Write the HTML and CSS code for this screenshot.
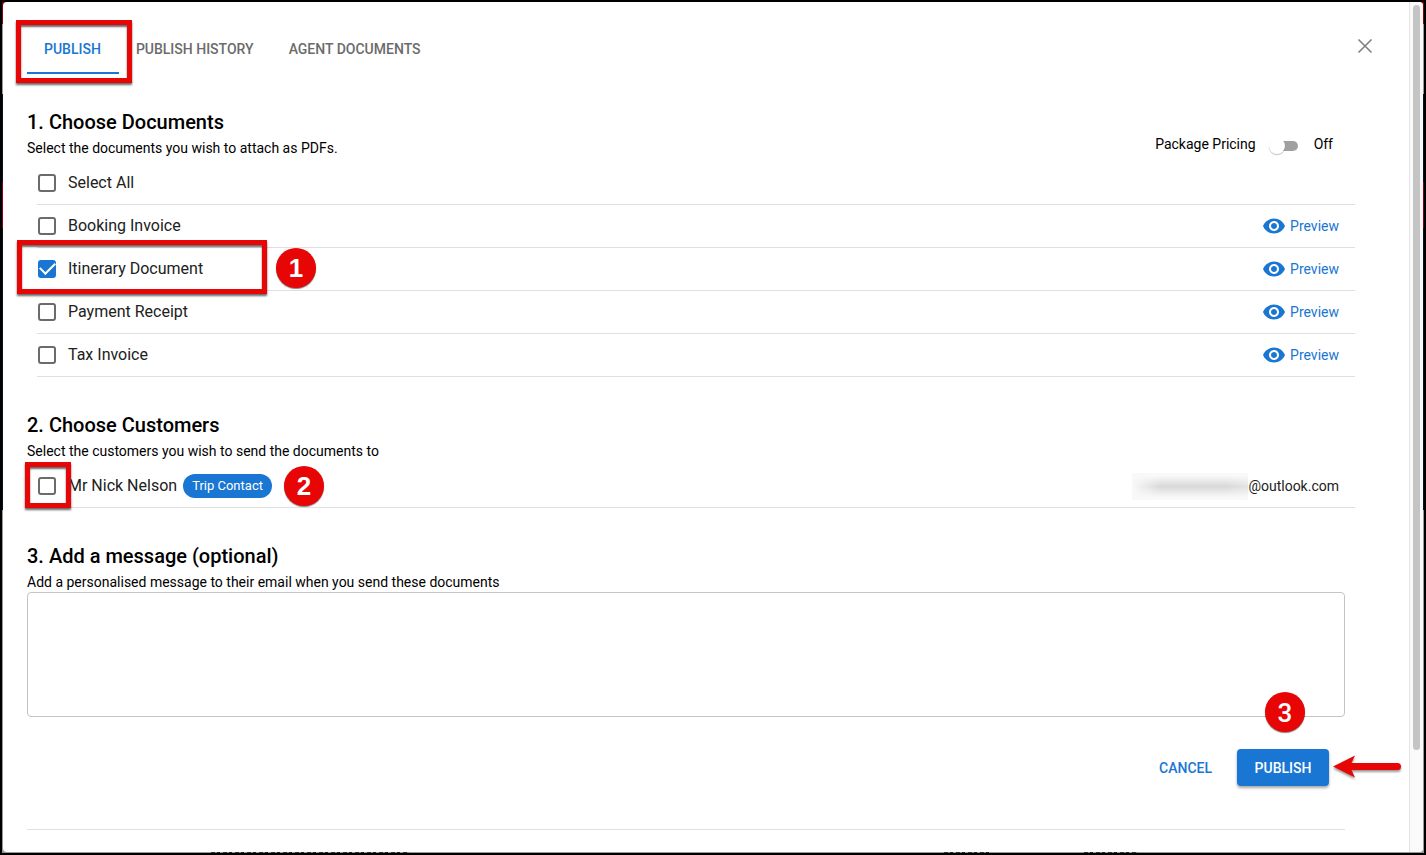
FILE: index.html
```html
<!DOCTYPE html>
<html lang="en">
<head>
<meta charset="utf-8">
<title>Publish documents</title>
<link rel="stylesheet" href="styles.css">
</head>
<body>
<svg class="sprite" aria-hidden="true">
  <symbol id="eye" viewBox="0 0 24 24"><path d="M12 4.500C7 4.500 2.730 7.610 1 12c1.730 4.390 6 7.500 11 7.500s9.270-3.110 11-7.500c-1.730-4.390-6-7.500-11-7.500zM12 17c-2.760 0-5-2.240-5-5s2.240-5 5-5 5 2.240 5 5-2.240 5-5 5zm0-8c-1.660 0-3 1.340-3 3s1.340 3 3 3 3-1.340 3-3-1.340-3-3-3z"/></symbol>
</svg>
<div class="backdrop">
  <div class="dialog" role="dialog" aria-label="Publish">
    <main class="dialog-body">
      <header class="top">
        <nav class="tabs" role="tablist">
          <div class="tab-holder">
            <button class="tab tab-active" role="tab" aria-selected="true">PUBLISH</button>
            <span class="mark mark-tab"></span>
          </div>
          <button class="tab" role="tab">PUBLISH HISTORY</button>
          <button class="tab" role="tab">AGENT DOCUMENTS</button>
        </nav>
        <button class="close" aria-label="Close">
          <svg viewBox="0 0 16 16" width="16" height="16"><path d="M1.500 1.500l13 13M14.500 1.500l-13 13" stroke="currentColor" stroke-width="1.600" fill="none"/></svg>
        </button>
      </header>

      <div class="content">
        <section class="section">
          <div class="section-head">
            <div>
              <h2>1. Choose Documents</h2>
              <p class="hint">Select the documents you wish to attach as PDFs.</p>
            </div>
            <div class="pricing">
              <label for="pricing">Package Pricing</label>
              <input class="switch" type="checkbox" role="switch" id="pricing">
              <span>Off</span>
            </div>
          </div>
          <ul class="list">
            <li class="row"><label class="choice"><input class="check" type="checkbox"><span>Select All</span></label></li>
            <li class="row"><label class="choice"><input class="check" type="checkbox"><span>Booking Invoice</span></label>
              <a class="preview" href="#"><svg width="24" height="24"><use href="#eye"/></svg>Preview</a></li>
            <li class="row"><label class="choice"><input class="check" type="checkbox" checked><span>Itinerary Document</span></label>
              <a class="preview" href="#"><svg width="24" height="24"><use href="#eye"/></svg>Preview</a>
              <span class="mark mark-document"></span><span class="step step-one">1</span></li>
            <li class="row"><label class="choice"><input class="check" type="checkbox"><span>Payment Receipt</span></label>
              <a class="preview" href="#"><svg width="24" height="24"><use href="#eye"/></svg>Preview</a></li>
            <li class="row"><label class="choice"><input class="check" type="checkbox"><span>Tax Invoice</span></label>
              <a class="preview" href="#"><svg width="24" height="24"><use href="#eye"/></svg>Preview</a></li>
          </ul>
        </section>

        <section class="section">
          <h2>2. Choose Customers</h2>
          <p class="hint">Select the customers you wish to send the documents to</p>
          <ul class="list">
            <li class="row">
              <label class="choice"><input class="check" type="checkbox"><span>Mr Nick Nelson</span><span class="chip">Trip Contact</span></label>
              <span class="email"><span class="redacted"></span>@outlook.com</span>
              <span class="mark mark-customer"></span><span class="step step-two">2</span>
            </li>
          </ul>
        </section>

        <section class="section">
          <h2>3. Add a message (optional)</h2>
          <label class="hint" for="message">Add a personalised message to their email when you send these documents</label>
          <textarea class="message" id="message"></textarea>
        </section>

        <footer class="actions">
          <button class="button button-text">CANCEL</button>
          <div class="publish">
            <button class="button button-solid">PUBLISH</button>
            <span class="step step-three">3</span>
            <svg class="arrow" viewBox="0 0 72 32" width="72" height="32" aria-hidden="true"><path d="M0 13.500 22 2.500 18.500 10H64.500a3.500 3.500 0 0 1 0 7H18.500L22 24.500Z"/></svg>
          </div>
        </footer>
      </div>
    </main>
    <div class="scrollbar" aria-hidden="true"><div class="thumb"></div></div>
  </div>
  <div class="page-edge" aria-hidden="true"><i></i><i></i><i></i></div>
</div>
</body>
</html>
```
FILE: styles.css
```css
* { box-sizing: border-box; }

body {
  margin: 0;
  font-family: Roboto, "Liberation Sans", sans-serif;
  font-size: 14px;
  line-height: 20px;
  color: #000;
}

button { font: inherit; border: 0; background: none; padding: 0; cursor: pointer; }

.sprite { display: none; }

.backdrop {
  position: relative;
  display: flex;
  height: 100vh;
  border: 2px solid #000;
  padding: 0 1px 1px;
  overflow: hidden;
  background: linear-gradient(#8b0000 0 22px, #999 22px 92px, #00151f 92px 180px, #8b0010 180px 226px, #00151f 226px 508px, #999 508px);
}

.dialog {
  display: flex;
  flex: 1;
  background: #fff;
  border-radius: 4px;
  overflow: hidden;
}

.dialog-body { flex: 1; padding: 24px; }

.top { display: flex; justify-content: space-between; align-items: flex-start; }

.tabs { display: flex; }

.tab-holder { position: relative; }

.tab {
  height: 48px;
  padding: 0 18px 0 17px;
  border-bottom: 2px solid transparent;
  font-weight: 500;
  color: #6b6b6b;
}

.tab-active { color: #1976d2; border-bottom-color: #1976d2; }

.close { width: 40px; height: 40px; color: #808080; display: grid; place-items: center; }

.content { padding-right: 64px; padding-top: 32px; margin-right: -24px; }

.section { margin-bottom: 32px; }

.section-head { display: flex; justify-content: space-between; align-items: flex-end; }

h2 { margin: 0; font-size: 20px; line-height: 32px; font-weight: 500; }

.hint { margin: 0; display: block; }

.pricing { display: flex; align-items: center; height: 28px; padding-right: 12px; }

.switch {
  appearance: none;
  position: relative;
  width: 27px;
  height: 10px;
  margin: 4px 16px 0 15px;
  border-radius: 5px;
  background: #a0a0a0;
}

.switch::before {
  content: "";
  position: absolute;
  left: -2px;
  top: -3px;
  width: 16px;
  height: 16px;
  border-radius: 50%;
  background: #fff;
  box-shadow: 0 1px 1px rgba(0, 0, 0, .25);
}

.list { list-style: none; margin: 4px -10px 0 10px; padding: 0; }

.row {
  position: relative;
  display: flex;
  justify-content: space-between;
  align-items: center;
  height: 43px;
  padding: 0 16px 0 1px;
  border-bottom: 1px solid #e0e0e0;
}

.choice { display: flex; align-items: center; font-size: 16px; color: #212121; }

.check {
  appearance: none;
  width: 18px;
  height: 18px;
  margin: 0 12px 0 0;
  border: 2px solid #6b6b6b;
  border-radius: 3px;
}

.check:checked { border-color: #1976d2; background: #1976d2; display: grid; place-items: center; }

.check:checked::before {
  content: "";
  width: 13px;
  height: 7px;
  margin-bottom: 5px;
  border: solid #fff;
  border-width: 0 0 2px 2px;
  transform: rotate(-45deg);
}

.preview { display: flex; align-items: center; gap: 4px; color: #1976d2; text-decoration: none; }
.preview svg { fill: currentColor; }

.chip {
  margin-left: 6px;
  padding: 0 9px;
  border-radius: 12px;
  background: #1976d2;
  color: #fff;
  font-size: 13px;
  line-height: 24px;
}

.email { display: flex; align-items: center; color: #212121; }

.redacted {
  width: 116px;
  height: 27px;
  background: linear-gradient(#f9f9f9 10%, transparent 50%, #f9f9f9 90%), linear-gradient(90deg, #f9f9f9, #d8d8d8 25% 80%, #e4e4e4);
}

.message {
  display: block;
  width: 100%;
  height: 125px;
  padding: 12px;
  border: 1px solid #c4c4c4;
  border-radius: 4px;
  font: inherit;
  resize: none;
}

.actions {
  display: flex;
  justify-content: flex-end;
  gap: 16px;
  padding: 0 16px 43px;
  border-bottom: 1px solid #e0e0e0;
}

.button { height: 37px; border-radius: 4px; font-weight: 500; }
.button-text { padding: 0 9px; color: #1976d2; }
.button-solid {
  width: 92px;
  background: #1976d2;
  color: #fff;
  box-shadow: 0 2px 3px rgba(0, 0, 0, .35);
}

.publish { position: relative; }

/* Red guide marks laid over the form */
.mark {
  position: absolute;
  z-index: 1;
  border: 5px solid #e80505;
  pointer-events: none;
  box-shadow: 0 2px 2px rgba(0, 0, 0, .6), inset 0 2px 2px rgba(0, 0, 0, .6);
}
.mark-tab { left: -11px; top: -6px; width: 116px; height: 63px; }
.mark-document { left: -20px; top: -8px; width: 250px; height: 54px; }
.mark-customer { left: -12px; top: -3px; width: 46px; height: 46px; }

.step {
  position: absolute;
  z-index: 1;
  width: 40px;
  height: 40px;
  border-radius: 50%;
  background: #e80505;
  color: #fff;
  font: bold 26px/40px "Liberation Sans", sans-serif;
  text-align: center;
  box-shadow: 0 1px 1px rgba(0, 0, 0, .5);
}
.step-one { left: 239px; top: 0; }
.step-two { left: 247px; top: 1px; }
.step-three { left: 28px; top: -57px; font-family: Roboto, sans-serif; font-weight: 500; line-height: 42px; }

.arrow {
  position: absolute;
  left: 96px;
  top: 4px;
  fill: #e80505;
  filter: drop-shadow(0 2px 1px rgba(0, 0, 0, .4));
}

.scrollbar { width: 14px; padding: 3px 3px 0; background: #fafafa; border-left: 1px solid #e4e4e4; }
.thumb { width: 7px; height: 88%; min-height: 40px; border-radius: 4px; background: #c4c4c4; }

/* Tops of the covered page's text, showing under the dialog */
.page-edge {
  position: absolute;
  bottom: 0;
  left: 209px;
  right: 286px;
  height: 1px;
  display: grid;
  grid-template-columns: 198px 1fr 48px 92px 54px;
}
.page-edge i { background: repeating-linear-gradient(90deg, #333 0 4px, #888 4px 6px, #222 6px 9px, #999 9px 12px); }
.page-edge i:nth-child(2) { grid-column: 3; }
.page-edge i:nth-child(3) { grid-column: 5; }
```
